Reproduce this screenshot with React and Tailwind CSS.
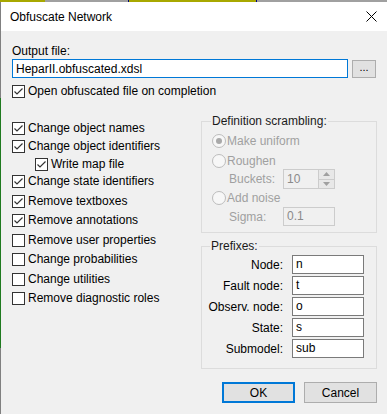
import React from 'react';

const font = { fontFamily: '"Liberation Sans", Arial, sans-serif' };

function Check({ checked }) {
  return (
    <span className="w-[13px] h-[13px] shrink-0 border border-[#333333] bg-white flex items-center justify-center">
      {checked && (
        <svg width="11" height="11" viewBox="0 0 11 11">
          <path d="M1.5 5.5 L4 8 L9.5 2.5" fill="none" stroke="#333333" strokeWidth="1.2" />
        </svg>
      )}
    </span>
  );
}

function CheckRow({ label, checked, className }) {
  return (
    <div className={`flex items-center h-[13px] ${className}`}>
      <Check checked={checked} />
      <span className="ml-[3px] text-[12px] leading-[15px] text-black whitespace-nowrap">{label}</span>
    </div>
  );
}

function Radio({ label, selected, className }) {
  return (
    <div className={`flex items-center h-[14px] ${className}`}>
      <span className="w-[14px] h-[14px] shrink-0 rounded-full border border-[#bcbcbc] bg-[#f7f7f7] flex items-center justify-center">
        {selected && <span className="w-[6px] h-[6px] rounded-full bg-[#a9a9a9]" />}
      </span>
      <span className="ml-[1px] text-[12px] leading-[15px] text-[#a0a0a0]">{label}</span>
    </div>
  );
}

const leftItems = [
  { label: 'Change object names', checked: true, mt: 'mt-0' },
  { label: 'Change object identifiers', checked: true, mt: 'mt-[5px]' },
  { label: 'Write map file', checked: true, mt: 'mt-[5px] ml-[23px]' },
  { label: 'Change state identifiers', checked: true, mt: 'mt-[4px]' },
  { label: 'Remove textboxes', checked: true, mt: 'mt-[7px]' },
  { label: 'Remove annotations', checked: true, mt: 'mt-[6px]' },
  { label: 'Remove user properties', checked: false, mt: 'mt-[7px]' },
  { label: 'Change probabilities', checked: false, mt: 'mt-[6px]' },
  { label: 'Change utilities', checked: false, mt: 'mt-[7px]' },
  { label: 'Remove diagnostic roles', checked: false, mt: 'mt-[6px]' },
];

const prefixes = [
  ['Node:', 'n'],
  ['Fault node:', 't'],
  ['Observ. node:', 'o'],
  ['State:', 's'],
  ['Submodel:', 'sub'],
];

export default function App() {
  return (
    <div className="w-[387px] h-[414px] flex flex-col overflow-hidden bg-[#f0f0f0]" style={font}>
      {/* window behind */}
      <div className="h-[2px] flex shrink-0">
        <div className="w-[45px] bg-[#a8a800]" />
        <div className="w-[83px] bg-[#a0a0a0]" />
        <div className="w-[1px] bg-[#000080]" />
        <div className="w-[127px] bg-[#a8a800]" />
        <div className="w-[1px] bg-[#000080]" />
        <div className="flex-1 bg-[#a0a0a0]" />
      </div>
      <div className="flex flex-1">
        <div className="w-[1px] flex flex-col">
          <div className="h-[96px] bg-[#808080]" />
          <div className="h-[250px] bg-[#1f7a1f]" />
          <div className="flex-1 bg-[#808080]" />
        </div>
        <div className="flex-1 flex flex-col">
          {/* title bar */}
          <div className="h-[29px] bg-white flex items-center justify-between pl-[9px] pr-[10px]">
            <span className="text-[12px] text-black">Obfuscate Network</span>
            <svg width="11" height="11" viewBox="0 0 11 11">
              <path d="M0.5 0.5 L10.5 10.5 M10.5 0.5 L0.5 10.5" stroke="#000" strokeWidth="1" />
            </svg>
          </div>

          <div className="flex-1 bg-[#f0f0f0] pl-[11px] pr-[10px]">
            <div className="mt-[13px] text-[12px] leading-[15px] text-black">Output file:</div>
            <div className="mt-[0px] flex items-center gap-[4px]">
              <div className="w-[336px] h-[19px] border border-[#0078d7] bg-white flex items-center pl-[3px] text-[12px] text-black">
                HeparII.obfuscated.xdsl
              </div>
              <div className="w-[24px] h-[18px] border border-[#adadad] bg-[#e1e1e1] flex items-center justify-center text-[11px] leading-none text-black pb-[3px]">
                ...
              </div>
            </div>
            <CheckRow className="mt-[7px]" label="Open obfuscated file on completion" checked />

            <div className="mt-[24px] flex justify-between">
              <div className="flex flex-col">
                {leftItems.map((it) => (
                  <CheckRow key={it.label} className={it.mt} label={it.label} checked={it.checked} />
                ))}
              </div>

              <div className="w-[176px] flex flex-col -mt-[8px]">
                <fieldset className="border border-[#dcdcdc] h-[119px] px-[10px]">
                  <legend className="-ml-[1px] px-[1px] text-[12px] leading-[14px] text-[#1a1a1a]">Definition scrambling:</legend>
                  <Radio className="mt-[6px]" label="Make uniform" selected />
                  <Radio className="mt-[6px]" label="Roughen" />
                  <div className="mt-[1px] flex items-center">
                    <span className="w-[71px] shrink-0 pl-[17px] text-[12px] text-[#a0a0a0]">Buckets:</span>
                    <div className="w-[52px] h-[20px] border border-[#cccccc] bg-[#f0f0f0] flex">
                      <span className="flex-1 pl-[3px] text-[12px] leading-[18px] text-[#8a8a8a]">10</span>
                      <div className="w-[16px] flex flex-col border-l border-[#cccccc]">
                        <div className="flex-1 flex items-center justify-center border-b border-[#cccccc] bg-[#e8e8e8]">
                          <svg width="7" height="4" viewBox="0 0 7 4"><path d="M0 4 L3.5 0 L7 4 Z" fill="#a0a0a0" /></svg>
                        </div>
                        <div className="flex-1 flex items-center justify-center bg-[#e8e8e8]">
                          <svg width="7" height="4" viewBox="0 0 7 4"><path d="M0 0 L3.5 4 L7 0 Z" fill="#a0a0a0" /></svg>
                        </div>
                      </div>
                    </div>
                  </div>
                  <Radio className="mt-[2px]" label="Add noise" />
                  <div className="mt-[2px] flex items-center">
                    <span className="w-[71px] shrink-0 pl-[17px] text-[12px] text-[#a0a0a0]">Sigma:</span>
                    <div className="w-[52px] h-[19px] border border-[#cccccc] bg-[#f0f0f0] pl-[3px] text-[12px] leading-[17px] text-[#8a8a8a]">0.1</div>
                  </div>
                </fieldset>

                <fieldset className="mt-[6px] border border-[#dcdcdc] h-[130px] pr-[12px]">
                  <legend className="ml-[8px] px-[1px] text-[12px] leading-[14px] text-[#1a1a1a]">Prefixes:</legend>
                  <div className="flex flex-col gap-[2px] mt-[2px]">
                    {prefixes.map(([label, val]) => (
                      <div key={label} className="flex items-center justify-end">
                        <span className="text-[12px] text-black mr-[9px]">{label}</span>
                        <div className="w-[72px] h-[19px] border border-[#7a7a7a] bg-white pl-[3px] text-[12px] leading-[17px] text-black">{val}</div>
                      </div>
                    ))}
                  </div>
                </fieldset>

                <div className="mt-[13px] flex justify-end gap-[9px]">
                  <button className="w-[73px] h-[21px] border-2 border-[#0078d7] bg-[#e1e1e1] text-[12px] text-black">OK</button>
                  <button className="w-[73px] h-[21px] border border-[#adadad] bg-[#e1e1e1] text-[12px] text-black">Cancel</button>
                </div>
              </div>
            </div>
          </div>
        </div>
      </div>
    </div>
  );
}
